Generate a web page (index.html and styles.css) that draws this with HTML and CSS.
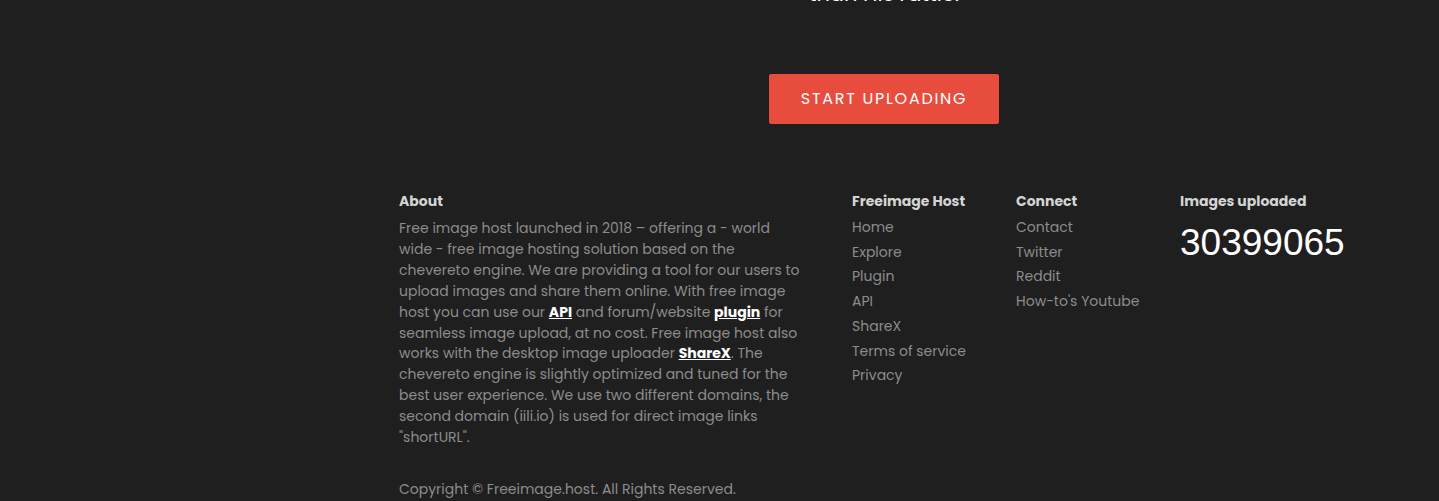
FILE: index.html
```html
<!DOCTYPE html>
<html lang="en">
<head>
<meta charset="utf-8">
<title>Freeimage.host</title>
<link rel="stylesheet" href="styles.css">
</head>
<body>
<div class="main">
  <section class="hero">
    <p class="hero-tail">than His rattle.</p>
    <a class="btn-upload" href="#">START UPLOADING</a>
  </section>
  <footer class="footer">
    <div class="footer-grid">
      <div class="col about">
        <h4>About</h4>
        <p>Free image host launched in 2018 – offering a - world wide - free image hosting solution based on the chevereto engine. We are providing a tool for our users to upload images and share them online. With free image host you can use our <a href="#">API</a> and forum/website <a href="#">plugin</a> for seamless image upload, at no cost. Free image host also works with the desktop image uploader <a href="#">ShareX</a>. The chevereto engine is slightly optimized and tuned for the best user experience. We use two different domains, the second domain (iili.io) is used for direct image links "shortURL".</p>
      </div>
      <div class="col">
        <h4>Freeimage Host</h4>
        <ul class="links">
          <li><a href="#">Home</a></li>
          <li><a href="#">Explore</a></li>
          <li><a href="#">Plugin</a></li>
          <li><a href="#">API</a></li>
          <li><a href="#">ShareX</a></li>
          <li><a href="#">Terms of service</a></li>
          <li><a href="#">Privacy</a></li>
        </ul>
      </div>
      <div class="col">
        <h4>Connect</h4>
        <ul class="links">
          <li><a href="#">Contact</a></li>
          <li><a href="#">Twitter</a></li>
          <li><a href="#">Reddit</a></li>
          <li><a href="#">How-to's Youtube</a></li>
        </ul>
      </div>
      <div class="col">
        <h4>Images uploaded</h4>
        <div class="count">30399065</div>
      </div>
    </div>
    <p class="copyright">Copyright © Freeimage.host. All Rights Reserved.</p>
  </footer>
</div>
</body>
</html>
```
FILE: styles.css
```css
html, body {
  margin: 0;
  padding: 0;
  background: #1f1f1f;
  height: 100%;
  overflow: hidden;
}
body {
  font-family: "Poppins", "Open Sans", "Noto Sans", sans-serif;
  color: #8c8c8c;
}
.main {
  padding-left: 329px;
}
.hero {
  display: flex;
  flex-direction: column;
  align-items: center;
}
.hero-tail {
  margin: -20px 0 0;
  font-size: 21px;
  line-height: 28px;
  color: #ffffff;
}
.btn-upload {
  margin-top: 66px;
  width: 230px;
  height: 50px;
  box-sizing: border-box;
  padding-bottom: 2px;
  display: flex;
  align-items: center;
  justify-content: center;
  background: #e84c3d;
  color: #fff;
  text-decoration: none;
  font-size: 16px;
  letter-spacing: 1.7px;
  border-radius: 2px;
}
.footer {
  width: 970px;
  margin: 67px auto 0;
}
.footer-grid {
  display: grid;
  grid-template-columns: 453px 164px 164px 1fr;
}
.col h4 {
  margin: 0 0 4px;
  font-size: 14px;
  line-height: 20px;
  font-weight: 700;
  color: #d4d4d4;
}
.about p {
  margin: 7px 0 0;
  width: 405px;
  font-size: 14px;
  line-height: 20.9px;
}
.about a {
  color: #fff;
  font-weight: 700;
  text-decoration: underline;
}
.links {
  list-style: none;
  margin: 0;
  padding: 0;
}
.links li {
  font-size: 14px;
  line-height: 24.7px;
}
.links a {
  color: #8c8c8c;
  text-decoration: none;
}
.count {
  margin-top: 11px;
  font-family: "Liberation Sans", Arial, sans-serif;
  font-size: 37px;
  line-height: 42px;
  color: #fff;
}
.copyright {
  margin: 31px 0 0;
  font-size: 14px;
  line-height: 20px;
}
```
